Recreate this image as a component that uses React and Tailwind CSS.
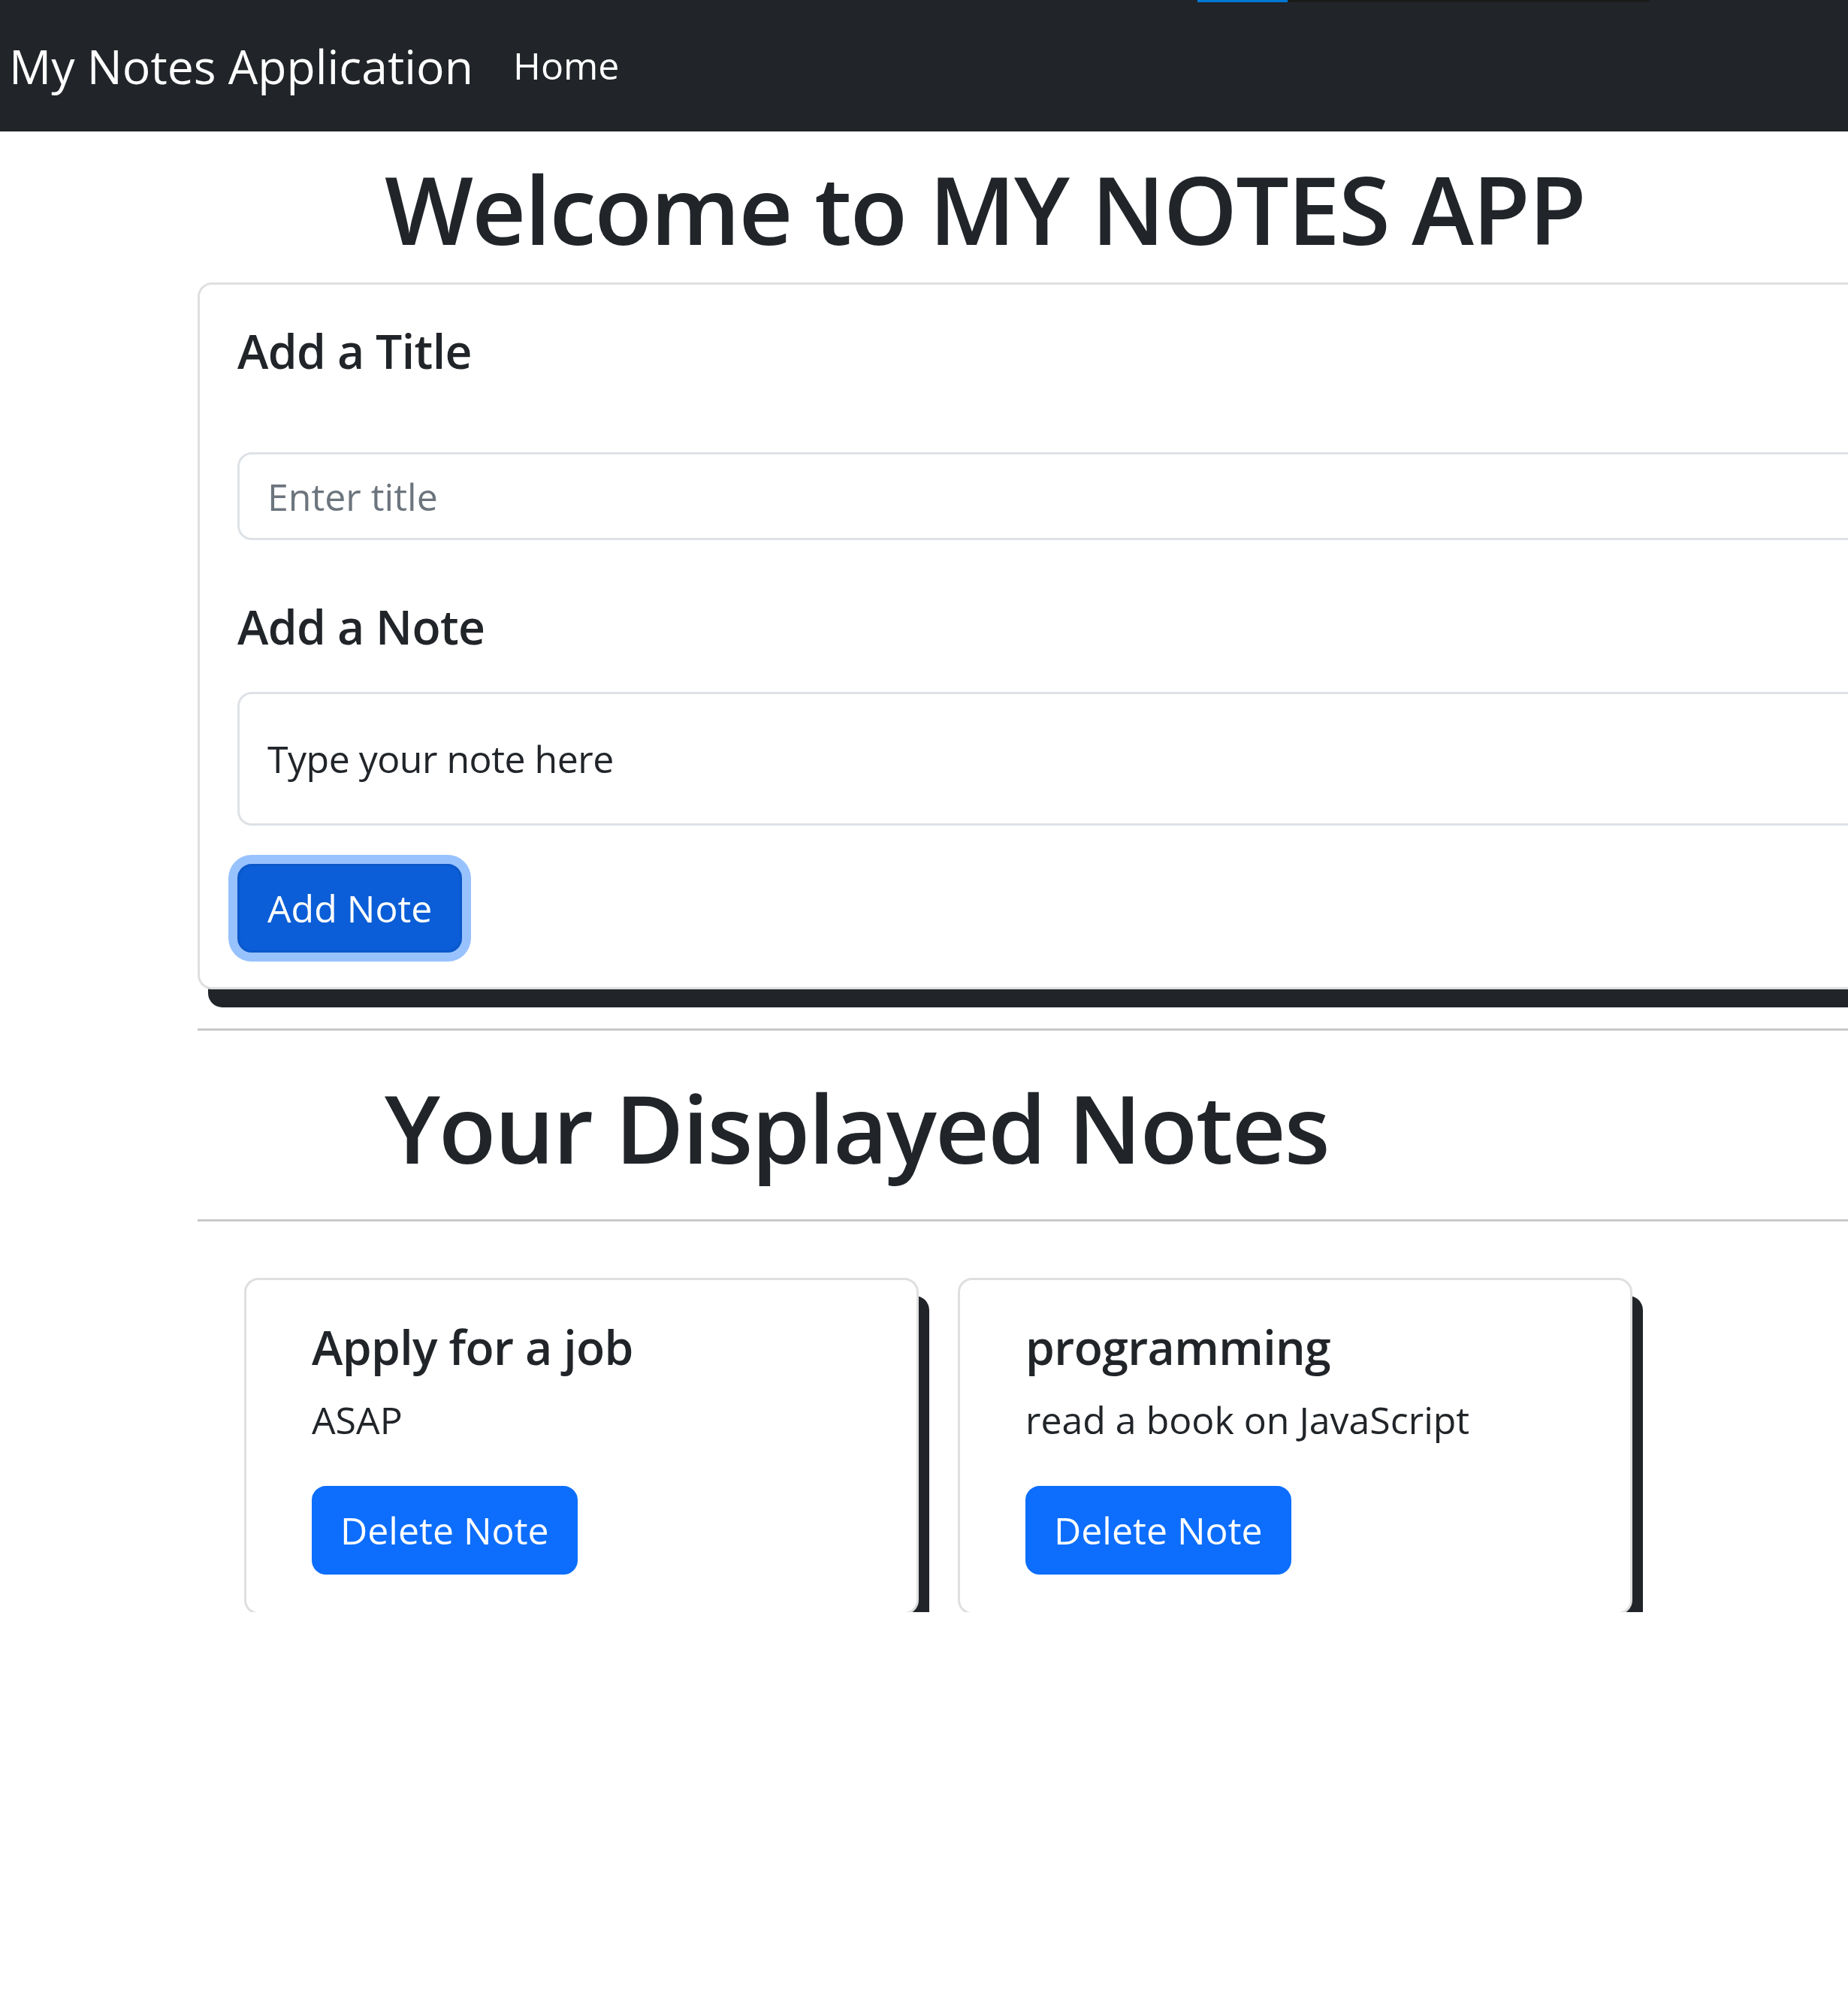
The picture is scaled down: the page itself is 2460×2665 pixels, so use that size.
import React from 'react';

const notes = [
    { id: 1, title: 'Apply for a job', body: 'ASAP' },
    { id: 2, title: 'programming', body: 'read a book on JavaScript' },
];

const NoteCard = ({ note }) => {
    return (
        <div className="w-[898px] shrink-0 border-[3px] border-[#dfdfdf] rounded-[19px] bg-white shadow-[14px_24px_0_#212529] pt-[51px] pl-[87px] pr-[50px] pb-[50px]">
            <h5 className="text-[62.5px] font-semibold leading-[1.2] mb-[23px] tracking-[-0.01em]">{note.title}</h5>
            <p className="text-[50px] leading-[1.5] mb-[50px]">{note.body}</p>
            <button className="h-[118px] px-[35px] border-[3px] border-[#0d6efd] bg-[#0d6efd] rounded-[19px] text-white text-[50px] leading-[1.5]">
                Delete Note
            </button>
        </div>
    );
};

const App = () => {
    return (
        <div className="relative w-[2460px] min-h-[2665px] overflow-hidden bg-white text-[#212529] font-['Open_Sans',sans-serif]">
            {/* Navbar */}
            <nav className="relative h-[175px] bg-[#212529] flex items-center">
                <div className="absolute top-0 left-[1594px] w-[120px] h-[3px] bg-[#0078d4]" />
                <div className="absolute top-0 left-[1714px] w-[482px] h-[3px] bg-[#1b1b1b]" />
                <a className="ml-[12px] mr-[28px] text-[62.5px] leading-[1.5] text-white whitespace-nowrap">My Notes Application</a>
                <a className="px-[25px] text-[50px] leading-[1.5] text-white">Home</a>
            </nav>

            <main className="pl-[263px]">
                <h1 className="mt-[28px] ml-[249px] text-[125px] font-semibold leading-[1.2] whitespace-nowrap tracking-[-0.015em]">
                    Welcome to MY NOTES APP
                </h1>

                {/* Add note form */}
                <div className="mt-[23px] w-[2400px] border-[3px] border-[#dfdfdf] rounded-[19px] bg-white shadow-[14px_24px_0_#212529] pt-[50px] px-[50px] pb-[46px]">
                    <h5 className="text-[62.5px] font-semibold leading-[1.2] mb-[98px] tracking-[-0.01em]">Add a Title</h5>
                    <input
                        type="text"
                        placeholder="Enter title"
                        className="block w-full h-[117px] border-[3px] border-[#dee2e6] rounded-[19px] px-[37px] text-[50px] placeholder:text-[#6c757d] outline-none"
                    />
                    <h5 className="mt-[77px] text-[62.5px] font-semibold leading-[1.2] mb-[50px] tracking-[-0.01em]">Add a Note</h5>
                    <input
                        type="text"
                        placeholder="Type your note here"
                        className="block w-full h-[178px] border-[3px] border-[#dee2e6] rounded-[19px] px-[37px] text-[50px] placeholder:text-[#212529] outline-none tracking-[-0.01em]"
                    />
                    <button className="mt-[51px] h-[118px] px-[37px] border-[3px] border-[#0a58ca] bg-[#0b5ed7] rounded-[19px] text-white text-[50px] leading-[1.5] shadow-[0_0_0_12px_#98c2fe]">
                        Add Note
                    </button>
                </div>

                <hr className="mt-[52px] w-[2400px] border-0 border-t-[3px] border-[#c8c9ca]" />

                <h1 className="mt-[54px] ml-[249px] text-[125px] font-semibold leading-[1.2] whitespace-nowrap tracking-[-0.015em]">
                    Your Displayed Notes
                </h1>

                <hr className="mt-[47px] w-[2400px] border-0 border-t-[3px] border-[#c8c9ca]" />

                {/* Notes list, bottom of the cards is cut off */}
                <div className="mt-[75px] ml-[62px] h-[445px] overflow-hidden flex items-start gap-[52px]">
                    {notes.map((note) => (
                        <NoteCard key={note.id} note={note} />
                    ))}
                </div>
            </main>
        </div>
    );
};

export default App;
